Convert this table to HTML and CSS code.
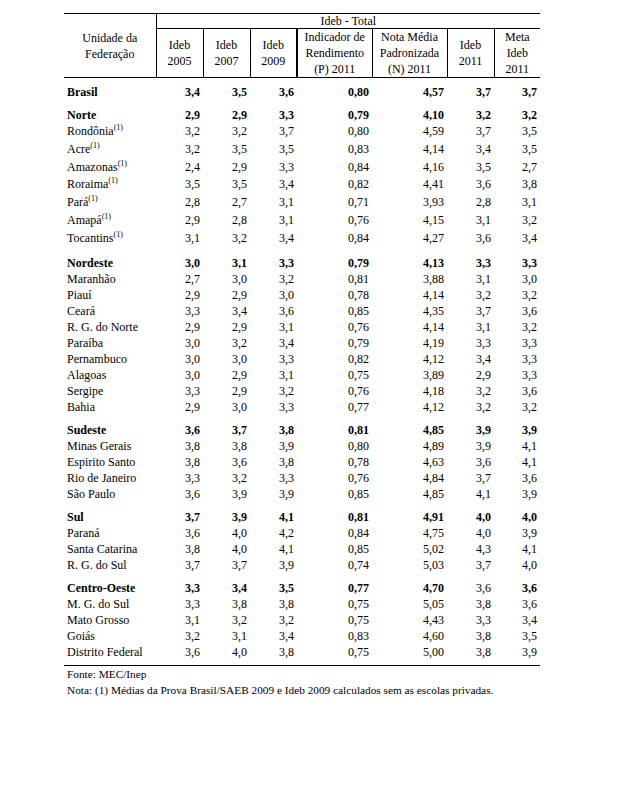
FILE: index.html
```html
<!DOCTYPE html>
<html lang="pt">
<head>
<meta charset="utf-8">
<title>Ideb - Total</title>
<link rel="stylesheet" href="styles.css">
</head>
<body>
<div class="page">
<table class="t">
<colgroup>
<col class="w-uf"><col class="w-s"><col class="w-s"><col class="w-s"><col class="w-l"><col class="w-l"><col class="w-s"><col class="w-m">
</colgroup>
<thead>
<tr class="h1"><th rowspan="2" class="uf">Unidade da<br>Federação</th><th colspan="7" class="top">Ideb - Total</th></tr>
<tr class="h2">
<th class="c">Ideb<br>2005</th>
<th class="c">Ideb<br>2007</th>
<th class="c thick">Ideb<br>2009</th>
<th class="c">Indicador de<br>Rendimento<br>(P) 2011</th>
<th class="c">Nota Média<br>Padronizada<br>(N) 2011</th>
<th class="c">Ideb<br>2011</th>
<th class="last">Meta<br>Ideb<br>2011</th>
</tr>
</thead>
<tbody>
<tr class="g first b"><td>Brasil</td><td>3,4</td><td>3,5</td><td>3,6</td><td>0,80</td><td>4,57</td><td>3,7</td><td>3,7</td></tr>

<tr class="g b"><td>Norte</td><td>2,9</td><td>2,9</td><td>3,3</td><td>0,79</td><td>4,10</td><td>3,2</td><td>3,2</td></tr>
<tr class="s"><td>Rondônia<span class="nt">(1)</span></td><td>3,2</td><td>3,2</td><td>3,7</td><td>0,80</td><td>4,59</td><td>3,7</td><td>3,5</td></tr>
<tr class="s"><td>Acre<span class="nt">(1)</span></td><td>3,2</td><td>3,5</td><td>3,5</td><td>0,83</td><td>4,14</td><td>3,4</td><td>3,5</td></tr>
<tr class="s"><td>Amazonas<span class="nt">(1)</span></td><td>2,4</td><td>2,9</td><td>3,3</td><td>0,84</td><td>4,16</td><td>3,5</td><td>2,7</td></tr>
<tr class="s"><td>Roraima<span class="nt">(1)</span></td><td>3,5</td><td>3,5</td><td>3,4</td><td>0,82</td><td>4,41</td><td>3,6</td><td>3,8</td></tr>
<tr class="s"><td>Pará<span class="nt">(1)</span></td><td>2,8</td><td>2,7</td><td>3,1</td><td>0,71</td><td>3,93</td><td>2,8</td><td>3,1</td></tr>
<tr class="s"><td>Amapá<span class="nt">(1)</span></td><td>2,9</td><td>2,8</td><td>3,1</td><td>0,76</td><td>4,15</td><td>3,1</td><td>3,2</td></tr>
<tr class="s"><td>Tocantins<span class="nt">(1)</span></td><td>3,1</td><td>3,2</td><td>3,4</td><td>0,84</td><td>4,27</td><td>3,6</td><td>3,4</td></tr>

<tr class="g b"><td>Nordeste</td><td>3,0</td><td>3,1</td><td>3,3</td><td>0,79</td><td>4,13</td><td>3,3</td><td>3,3</td></tr>
<tr><td>Maranhão</td><td>2,7</td><td>3,0</td><td>3,2</td><td>0,81</td><td>3,88</td><td>3,1</td><td>3,0</td></tr>
<tr><td>Piauí</td><td>2,9</td><td>2,9</td><td>3,0</td><td>0,78</td><td>4,14</td><td>3,2</td><td>3,2</td></tr>
<tr><td>Ceará</td><td>3,3</td><td>3,4</td><td>3,6</td><td>0,85</td><td>4,35</td><td>3,7</td><td>3,6</td></tr>
<tr><td>R. G. do Norte</td><td>2,9</td><td>2,9</td><td>3,1</td><td>0,76</td><td>4,14</td><td>3,1</td><td>3,2</td></tr>
<tr><td>Paraíba</td><td>3,0</td><td>3,2</td><td>3,4</td><td>0,79</td><td>4,19</td><td>3,3</td><td>3,3</td></tr>
<tr><td>Pernambuco</td><td>3,0</td><td>3,0</td><td>3,3</td><td>0,82</td><td>4,12</td><td>3,4</td><td>3,3</td></tr>
<tr><td>Alagoas</td><td>3,0</td><td>2,9</td><td>3,1</td><td>0,75</td><td>3,89</td><td>2,9</td><td>3,3</td></tr>
<tr><td>Sergipe</td><td>3,3</td><td>2,9</td><td>3,2</td><td>0,76</td><td>4,18</td><td>3,2</td><td>3,6</td></tr>
<tr><td>Bahia</td><td>2,9</td><td>3,0</td><td>3,3</td><td>0,77</td><td>4,12</td><td>3,2</td><td>3,2</td></tr>

<tr class="g b"><td>Sudeste</td><td>3,6</td><td>3,7</td><td>3,8</td><td>0,81</td><td>4,85</td><td>3,9</td><td>3,9</td></tr>
<tr><td>Minas Gerais</td><td>3,8</td><td>3,8</td><td>3,9</td><td>0,80</td><td>4,89</td><td>3,9</td><td>4,1</td></tr>
<tr><td>Espirito Santo</td><td>3,8</td><td>3,6</td><td>3,8</td><td>0,78</td><td>4,63</td><td>3,6</td><td>4,1</td></tr>
<tr><td>Rio de Janeiro</td><td>3,3</td><td>3,2</td><td>3,3</td><td>0,76</td><td>4,84</td><td>3,7</td><td>3,6</td></tr>
<tr><td>São Paulo</td><td>3,6</td><td>3,9</td><td>3,9</td><td>0,85</td><td>4,85</td><td>4,1</td><td>3,9</td></tr>

<tr class="g b"><td>Sul</td><td>3,7</td><td>3,9</td><td>4,1</td><td>0,81</td><td>4,91</td><td>4,0</td><td>4,0</td></tr>
<tr><td>Paraná</td><td>3,6</td><td>4,0</td><td>4,2</td><td>0,84</td><td>4,75</td><td>4,0</td><td>3,9</td></tr>
<tr><td>Santa Catarina</td><td>3,8</td><td>4,0</td><td>4,1</td><td>0,85</td><td>5,02</td><td>4,3</td><td>4,1</td></tr>
<tr><td>R. G. do Sul</td><td>3,7</td><td>3,7</td><td>3,9</td><td>0,74</td><td>5,03</td><td>3,7</td><td>4,0</td></tr>

<tr class="g b"><td>Centro-Oeste</td><td>3,3</td><td>3,4</td><td>3,5</td><td>0,77</td><td>4,70</td><td class="reg">3,6</td><td>3,6</td></tr>
<tr><td>M. G. do Sul</td><td>3,3</td><td>3,8</td><td>3,8</td><td>0,75</td><td>5,05</td><td>3,8</td><td>3,6</td></tr>
<tr><td>Mato Grosso</td><td>3,1</td><td>3,2</td><td>3,2</td><td>0,75</td><td>4,43</td><td>3,3</td><td>3,4</td></tr>
<tr><td>Goiás</td><td>3,2</td><td>3,1</td><td>3,4</td><td>0,83</td><td>4,60</td><td>3,8</td><td>3,5</td></tr>
<tr class="end"><td>Distrito Federal</td><td>3,6</td><td>4,0</td><td>3,8</td><td>0,75</td><td>5,00</td><td>3,8</td><td>3,9</td></tr>
</tbody>
</table>
<div class="foot">
<p>Fonte: MEC/Inep</p>
<p>Nota: (1) Médias da Prova Brasil/SAEB 2009 e Ideb 2009 calculados sem as escolas privadas.</p>
</div>
</div>
</body>
</html>
```

FILE: styles.css
```css
html, body {
  margin: 0;
  padding: 0;
  background: #ffffff;
}

.page {
  padding: 13px 0 0 64px;
  font-family: "Liberation Serif", "Times New Roman", serif;
  color: #000000;
}

.t {
  border-collapse: collapse;
  table-layout: fixed;
  width: 476px;
  font-size: 12px;
  line-height: 16px;
  border-top: 1px solid #000;
  border-bottom: 1px solid #000;
}

.w-uf { width: 92px; }
.w-s { width: 47px; }
.w-l { width: 75px; }
.w-m { width: 46px; }

.t th {
  font-weight: normal;
  text-align: center;
  vertical-align: middle;
  padding: 0;
}

.t .uf {
  border-right: 1px solid #000;
  border-bottom: 1px solid #000;
}

.t .top {
  border-bottom: 1px solid #000;
  line-height: 14px;
  height: 14px;
}

.t .h2 th {
  height: 47px;
  border-bottom: 1px solid #000;
}

.t .h2 .c {
  border-right: 1px solid #000;
}

.t .h2 .thick {
  border-right: 2px solid #000;
}

.t td {
  padding: 0 3px 0 0;
  text-align: right;
  white-space: nowrap;
}

.t td:first-child {
  text-align: left;
  padding: 0 0 0 3px;
}

.t tr.g td {
  padding-top: 7px;
}

.t tr.first td {
  padding-top: 6px;
}

.t tr.b td {
  font-weight: bold;
}

.t tr.b td.reg {
  font-weight: normal;
}

.t tr.s td {
  line-height: 17.8px;
}

.t tr.end td {
  padding-bottom: 5px;
}

.nt {
  font-size: 8px;
  line-height: 0;
  vertical-align: 5px;
}

.foot {
  padding-left: 3px;
  font-size: 11.3px;
  line-height: 16px;
}

.foot p {
  margin: 0;
}
```
